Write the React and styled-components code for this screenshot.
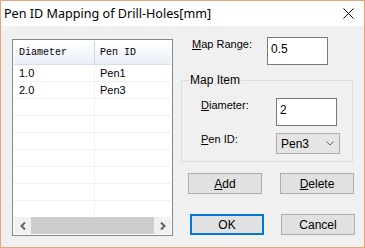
import styled, { createGlobalStyle } from 'styled-components';

const GlobalStyle = createGlobalStyle`
  html, body {
    margin: 0;
    padding: 0;
    background: #ffffff;
  }
  * {
    box-sizing: border-box;
  }
`;

const Window = styled.div`
  width: 365px;
  height: 248px;
  border: 1px solid #e8a47c;
  background: #f0f0f0;
  display: flex;
  flex-direction: column;
  font-family: 'Liberation Sans', Arial, sans-serif;
  font-size: 11px;
  color: #000;
`;

const TitleBar = styled.div`
  height: 25px;
  flex: none;
  background: #ffffff;
  display: flex;
  align-items: center;
  justify-content: space-between;
  padding: 0 10px 0 3px;
`;

const Title = styled.span`
  font-family: 'Noto Sans', sans-serif;
  font-size: 12.6px;
  line-height: 16px;
  color: #000;
  margin-top: 1px;
`;

const Body = styled.div`
  flex: 1;
  display: flex;
  align-items: flex-start;
  gap: 8px;
  padding: 11px 9px 11px 11px;
`;

const ListView = styled.div`
  width: 161px;
  height: 197px;
  margin-top: 2px;
  border: 1px solid #828790;
  background: #ffffff;
  padding: 1px;
  display: flex;
  flex-direction: column;
`;

const HeaderRow = styled.div`
  display: grid;
  grid-template-columns: 81px 1fr;
  height: 24px;
  flex: none;
  background: linear-gradient(#ffffff, #e9eff8);
  border-bottom: 1px solid #d5dfee;
`;

const HeaderCell = styled.div`
  font-family: 'Liberation Mono', monospace;
  font-size: 10px;
  display: flex;
  align-items: center;
  padding-left: 5px;
  border-right: ${(p) => (p.$last ? 'none' : '1px solid #c9d4e4')};
`;

const Rows = styled.div`
  flex: 1;
  display: flex;
  flex-direction: column;
  overflow: hidden;
`;

const Row = styled.div`
  display: grid;
  grid-template-columns: 81px 1fr;
  height: 17px;
  flex: none;
  border-bottom: 1px solid #f0f0f0;
`;

const Cell = styled.div`
  display: flex;
  align-items: center;
  padding-left: 5px;
  font-size: 11px;
  border-right: ${(p) => (p.$last ? 'none' : '1px solid #f0f0f0')};
`;

const ScrollBar = styled.div`
  height: 17px;
  flex: none;
  display: flex;
  background: #f0f0f0;
`;

const ScrollArrow = styled.div`
  width: 17px;
  display: flex;
  align-items: center;
  justify-content: center;
`;

const ScrollThumb = styled.div`
  flex: 1;
  background: #cdcdcd;
`;

const RightColumn = styled.div`
  width: 174px;
  display: flex;
  flex-direction: column;
`;

const FieldRow = styled.div`
  display: flex;
  align-items: flex-start;
  height: ${(p) => p.$h}px;
  padding-left: ${(p) => p.$indent}px;
  margin-top: ${(p) => p.$mt || 0}px;
`;

const Label = styled.span`
  width: 75px;
  line-height: 13px;
  margin-top: ${(p) => p.$mt || 0}px;
`;

const TextBox = styled.div`
  width: 61px;
  height: 28px;
  border: 1px solid #7a7a7a;
  background: #ffffff;
  padding: 4px 0 0 3px;
  font-size: 12px;
  line-height: 14px;
`;

const GroupBox = styled.div`
  position: relative;
  width: 172px;
  margin-top: 15px;
  border: 1px solid #dcdcdc;
  padding: 17px 0 7px 0;
`;

const GroupLabel = styled.span`
  position: absolute;
  top: -8px;
  left: 7px;
  padding: 0 1px;
  background: #f0f0f0;
  font-size: 12px;
  line-height: 14px;
`;

const Select = styled.div`
  width: 64px;
  height: 21px;
  border: 1px solid #acacac;
  background: #e5e5e5;
  display: flex;
  align-items: center;
  justify-content: space-between;
  padding: 0 5px 0 4px;
  font-size: 12px;
`;

const ButtonRow = styled.div`
  display: flex;
  margin-top: ${(p) => p.$mt}px;
  padding-left: ${(p) => p.$indent}px;
  gap: ${(p) => p.$gap}px;
`;

const Button = styled.div`
  width: 74px;
  height: 21px;
  border: ${(p) => (p.$default ? '2px solid #0078d7' : '1px solid #adadad')};
  background: #e1e1e1;
  display: flex;
  align-items: center;
  justify-content: center;
  font-size: 12px;
`;

const rows = [
  ['1.0', 'Pen1'],
  ['2.0', 'Pen3'],
  ['', ''], ['', ''], ['', ''], ['', ''], ['', ''], ['', ''], ['', ''],
];

export default function App() {
  return (
    <>
      <GlobalStyle />
      <Window>
        <TitleBar>
          <Title>Pen ID Mapping of Drill-Holes[mm]</Title>
          <svg width="11" height="11" viewBox="0 0 11 11">
            <path d="M0.5 0.5 L10.5 10.5 M10.5 0.5 L0.5 10.5" stroke="#000" strokeWidth="1" />
          </svg>
        </TitleBar>
        <Body>
          <ListView>
            <HeaderRow>
              <HeaderCell>Diameter</HeaderCell>
              <HeaderCell $last>Pen ID</HeaderCell>
            </HeaderRow>
            <Rows>
              {rows.map((r, i) => (
                <Row key={i}>
                  <Cell>{r[0]}</Cell>
                  <Cell $last>{r[1]}</Cell>
                </Row>
              ))}
            </Rows>
            <ScrollBar>
              <ScrollArrow>
                <svg width="6" height="8" viewBox="0 0 6 8">
                  <path d="M5 0.5 L1.5 4 L5 7.5" stroke="#606060" strokeWidth="2" fill="none" />
                </svg>
              </ScrollArrow>
              <ScrollThumb />
              <ScrollArrow>
                <svg width="6" height="8" viewBox="0 0 6 8">
                  <path d="M1 0.5 L4.5 4 L1 7.5" stroke="#606060" strokeWidth="2" fill="none" />
                </svg>
              </ScrollArrow>
            </ScrollBar>
          </ListView>
          <RightColumn>
            <FieldRow $h={28} $indent={11}>
              <Label $mt={1}><u>M</u>ap Range:</Label>
              <TextBox>0.5</TextBox>
            </FieldRow>
            <GroupBox>
              <GroupLabel>Map Item</GroupLabel>
              <FieldRow $h={28} $indent={19}>
                <Label $mt={1}><u>D</u>iameter:</Label>
                <TextBox>2</TextBox>
              </FieldRow>
              <FieldRow $h={21} $indent={19} $mt={7}>
                <Label><u>P</u>en ID:</Label>
                <Select>
                  <span>Pen3</span>
                  <svg width="8" height="5" viewBox="0 0 8 5">
                    <path d="M0.5 0.5 L4 4 L7.5 0.5" stroke="#606060" strokeWidth="1" fill="none" />
                  </svg>
                </Select>
              </FieldRow>
            </GroupBox>
            <ButtonRow $mt={11} $indent={7} $gap={18}>
              <Button><span><u>A</u>dd</span></Button>
              <Button><span><u>D</u>elete</span></Button>
            </ButtonRow>
            <ButtonRow $mt={20} $indent={9} $gap={17}>
              <Button $default>OK</Button>
              <Button>Cancel</Button>
            </ButtonRow>
          </RightColumn>
        </Body>
      </Window>
    </>
  );
}
